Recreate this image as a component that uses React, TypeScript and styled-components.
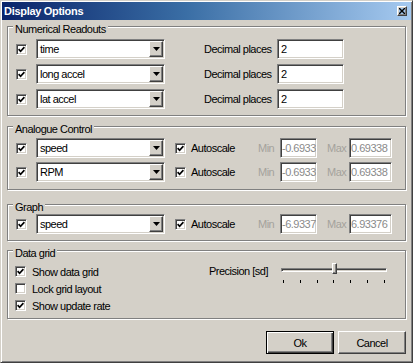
import React from "react";
import styled, { createGlobalStyle } from "styled-components";

const GlobalStyle = createGlobalStyle`
  html, body {
    margin: 0;
    padding: 0;
    background: #d4d0c8;
  }
  body {
    font-family: "Liberation Sans", Arial, sans-serif;
  }
`;

const raised = `
  border: 1px solid;
  border-color: #fff #404040 #404040 #fff;
  box-shadow: inset -1px -1px #808080, inset 1px 1px #d4d0c8;
`;

const sunken = `
  border: 1px solid;
  border-color: #808080 #fff #fff #808080;
  box-shadow: inset 1px 1px #404040, inset -1px -1px #d4d0c8;
`;

const Window = styled.div`
  box-sizing: border-box;
  width: 413px;
  height: 363px;
  padding: 1px;
  background: #d4d0c8;
  border: 1px solid;
  border-color: #d4d0c8 #404040 #404040 #d4d0c8;
  box-shadow: inset 1px 1px #fff, inset -1px -1px #808080;
  display: flex;
  flex-direction: column;
  font-size: 11px;
  letter-spacing: -0.5px;
  color: #000;
`;

const TitleBar = styled.div`
  height: 18px;
  display: flex;
  align-items: center;
  padding: 0 4px 0 2px;
  background: linear-gradient(90deg, #0a246a 0%, #3a6ea5 45%, #a6caf0 100%);
`;

const Title = styled.span`
  color: #fff;
  font-weight: bold;
  letter-spacing: -0.3px;
`;

const CloseButton = styled.span`
  ${raised};
  box-sizing: border-box;
  margin-left: auto;
  width: 10px;
  height: 10px;
  display: flex;
  align-items: center;
  justify-content: center;
`;

const Body = styled.div`
  flex: 1;
  display: flex;
  flex-direction: column;
  padding: 0 5px;
`;

const Group = styled.section<{ $top: number; $bottom: number }>`
  margin-top: ${(p) => p.$top}px;
  padding: 0 8px ${(p) => p.$bottom}px 8px;
  border: 1px solid #808080;
  box-shadow: inset 1px 1px #fff, 1px 1px #fff;
`;

const Caption = styled.div`
  display: table;
  margin: -4px 0 0 -3px;
  padding: 0 2px;
  line-height: 13px;
  background: #d4d0c8;
`;

const Rows = styled.div<{ $top: number; $gap: number }>`
  display: flex;
  flex-direction: column;
  margin-top: ${(p) => p.$top}px;
  gap: ${(p) => p.$gap}px;
`;

const Row = styled.div<{ $h?: number }>`
  display: flex;
  align-items: center;
  height: ${(p) => p.$h ?? 20}px;
`;

const Box = styled.span`
  ${sunken};
  box-sizing: border-box;
  width: 11px;
  height: 11px;
  flex-shrink: 0;
  background: #fff;
  display: inline-flex;
  align-items: center;
  justify-content: center;
`;

const Combo = styled.div`
  ${sunken};
  box-sizing: border-box;
  width: 129px;
  height: 20px;
  margin-left: 9px;
  padding: 1px;
  background: #fff;
  display: flex;
  align-items: center;
`;

const ComboText = styled.span`
  flex: 1;
  padding-left: 2px;
  white-space: nowrap;
`;

const DropButton = styled.span`
  ${raised};
  box-sizing: border-box;
  width: 14px;
  height: 16px;
  display: flex;
  align-items: center;
  justify-content: center;
  background: #d4d0c8;
`;

const Label = styled.span<{ $w?: number; $ml?: number; $muted?: boolean }>`
  display: flex;
  flex-shrink: 0;
  width: ${(p) => (p.$w ? `${p.$w}px` : "auto")};
  margin-left: ${(p) => p.$ml ?? 0}px;
  white-space: nowrap;
  color: ${(p) => (p.$muted ? "#a4a29c" : "#000")};
`;

const Field = styled.div<{ $w: number; $muted?: boolean }>`
  ${sunken};
  box-sizing: border-box;
  width: ${(p) => p.$w}px;
  height: 20px;
  padding: 0 0 0 ${(p) => (p.$muted ? 1 : 3)}px;
  background: #fff;
  display: flex;
  align-items: center;
  overflow: hidden;
  white-space: nowrap;
  color: ${(p) => (p.$muted ? "#8a8a8a" : "#000")};
`;

const GridContent = styled.div`
  display: flex;
  margin-top: 3px;
`;

const CheckList = styled.div`
  width: 194px;
  margin-left: -1px;
  display: flex;
  flex-direction: column;
`;

const CheckLabel = styled.span`
  margin-left: 6px;
`;

const Precision = styled.div`
  display: flex;
  align-items: flex-start;
  padding-top: 2px;
`;

const SliderBox = styled.div`
  position: relative;
  width: 106px;
  margin-left: 12px;
`;

const Track = styled.div`
  ${sunken};
  box-sizing: border-box;
  height: 4px;
  margin-top: 3px;
  background: #d4d0c8;
`;

const Thumb = styled.span`
  ${raised};
  position: absolute;
  box-sizing: border-box;
  left: 51px;
  top: -2px;
  width: 5px;
  height: 11px;
  background: #d4d0c8;
`;

const Ticks = styled.div`
  display: flex;
  justify-content: space-between;
  margin-top: 8px;
  padding: 0 2px;
`;

const Tick = styled.span`
  width: 1px;
  height: 3px;
  background: #000;
`;

const Buttons = styled.div`
  display: flex;
  justify-content: flex-end;
  gap: 4px;
  margin-top: 12px;
`;

const Button = styled.button<{ $default?: boolean }>`
  box-sizing: border-box;
  width: 68px;
  height: 23px;
  padding: 0;
  font: inherit;
  letter-spacing: inherit;
  color: #000;
  background: #d4d0c8;
  border: 1px solid;
  border-color: ${(p) => (p.$default ? "#000" : "#fff #404040 #404040 #fff")};
  box-shadow: ${(p) =>
    p.$default
      ? "inset 1px 1px #fff, inset -1px -1px #404040, inset -2px -2px #808080"
      : "inset -1px -1px #808080, inset 1px 1px #d4d0c8"};
`;

const Check = ({ checked }: { checked?: boolean }) => (
  <Box>
    {checked && (
      <svg width="7" height="7" viewBox="0 0 7 7">
        <path d="M0.6 3.2 L2.6 5.3 L6.4 1.2" fill="none" stroke="#000" strokeWidth="1.7" />
      </svg>
    )}
  </Box>
);

const Select = ({ value }: { value: string }) => (
  <Combo>
    <ComboText>{value}</ComboText>
    <DropButton>
      <svg width="7" height="4" viewBox="0 0 7 4">
        <polygon points="0,0 7,0 3.5,4" fill="#000" />
      </svg>
    </DropButton>
  </Combo>
);

const readouts = ["time", "long accel", "lat accel"];

const analogue = [
  { channel: "speed", min: "-0.6933", max: "0.69338" },
  { channel: "RPM", min: "-0.6933", max: "0.69338" },
];

const ScaleRow = ({ channel, min, max }: { channel: string; min: string; max: string }) => (
  <Row>
    <Check checked />
    <Select value={channel} />
    <Label $ml={10}>
      <Check checked />
    </Label>
    <Label $ml={5} $w={67}>Autoscale</Label>
    <Label $w={22} $muted>Min</Label>
    <Field $w={37} $muted>{min}</Field>
    <Label $ml={10} $w={22} $muted>Max</Label>
    <Field $w={43} $muted>{max}</Field>
  </Row>
);

export default function App() {
  return (
    <>
      <GlobalStyle />
      <Window>
        <TitleBar>
          <Title>Display Options</Title>
          <CloseButton>
            <svg width="6" height="6" viewBox="0 0 6 6">
              <path d="M0 0 L6 6 M6 0 L0 6" stroke="#000" strokeWidth="1.4" />
            </svg>
          </CloseButton>
        </TitleBar>
        <Body>
          <Group $top={6} $bottom={6}>
            <Caption>Numerical Readouts</Caption>
            <Rows $top={3} $gap={5}>
              {readouts.map((r) => (
                <Row key={r}>
                  <Check checked />
                  <Select value={r} />
                  <Label $ml={39} $w={73}>Decimal places</Label>
                  <Field $w={67}>2</Field>
                </Row>
              ))}
            </Rows>
          </Group>

          <Group $top={10} $bottom={7}>
            <Caption>Analogue Control</Caption>
            <Rows $top={2} $gap={4}>
              {analogue.map((a) => (
                <ScaleRow key={a.channel} {...a} />
              ))}
            </Rows>
          </Group>

          <Group $top={14} $bottom={6}>
            <Caption>Graph</Caption>
            <Rows $top={0} $gap={0}>
              <ScaleRow channel="speed" min="-6.9337" max="6.93376" />
            </Rows>
          </Group>

          <Group $top={9} $bottom={4}>
            <Caption>Data grid</Caption>
            <GridContent>
              <CheckList>
                <Row $h={17}>
                  <Check checked />
                  <CheckLabel>Show data grid</CheckLabel>
                </Row>
                <Row $h={17}>
                  <Check />
                  <CheckLabel>Lock grid layout</CheckLabel>
                </Row>
                <Row $h={17}>
                  <Check checked />
                  <CheckLabel>Show update rate</CheckLabel>
                </Row>
              </CheckList>
              <Precision>
                <Label $w={60}>Precision [sd]</Label>
                <SliderBox>
                  <Track />
                  <Thumb />
                  <Ticks>
                    {Array.from({ length: 7 }, (_, i) => (
                      <Tick key={i} />
                    ))}
                  </Ticks>
                </SliderBox>
              </Precision>
            </GridContent>
          </Group>

          <Buttons>
            <Button $default>Ok</Button>
            <Button>Cancel</Button>
          </Buttons>
        </Body>
      </Window>
    </>
  );
}
